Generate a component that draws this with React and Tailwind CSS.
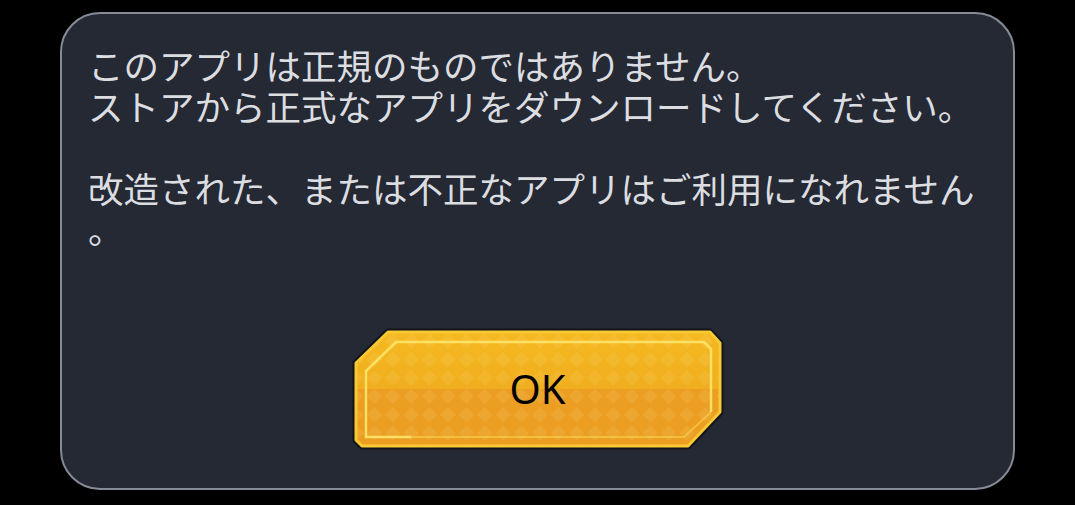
import React from "react";

const lines = [
  "このアプリは正規のものではありません。",
  "ストアから正式なアプリをダウンロードしてください。",
  "",
  "改造された、または不正なアプリはご利用になれません",
  "。",
];

const OUTER = "32,0 354,0 364,11 364,80 332,114 6,114 0,108 0,31";

const OkButton = () => (
  <button
    type="button"
    className="relative w-[364px] h-[114px] flex items-center justify-center"
  >
    <svg
      className="absolute inset-0 overflow-visible"
      width="364"
      height="114"
      viewBox="0 0 364 114"
    >
      <defs>
        <clipPath id="btnClip">
          <polygon points={OUTER} />
        </clipPath>
        <pattern
          id="diamonds"
          width="26"
          height="26"
          patternUnits="userSpaceOnUse"
          patternTransform="rotate(45)"
        >
          <rect x="1" y="1" width="11" height="11" fill="#fff4b8" opacity="0.09" />
          <rect x="14" y="14" width="11" height="11" fill="#fff4b8" opacity="0.09" />
        </pattern>
        <linearGradient id="topFill" x1="0" y1="0" x2="0" y2="1">
          <stop offset="0" stopColor="#f5b921" />
          <stop offset="1" stopColor="#f0ae1f" />
        </linearGradient>
      </defs>
      <polygon
        points={OUTER}
        fill="none"
        stroke="#101216"
        strokeWidth="7"
        strokeLinejoin="round"
        opacity="0.85"
      />
      <g clipPath="url(#btnClip)">
        <rect x="0" y="0" width="364" height="57" fill="url(#topFill)" />
        <rect x="0" y="57" width="364" height="57" fill="#eb9e22" />
        <rect x="0" y="0" width="364" height="114" fill="url(#diamonds)" />
      </g>
      <polygon
        points={OUTER}
        fill="none"
        stroke="#f8c933"
        strokeWidth="3"
        strokeLinejoin="round"
      />
      <path
        d="M 55 105 L 328 105 L 355 80"
        fill="none"
        stroke="#f9d34c"
        strokeWidth="2"
        opacity="0.6"
      />
      <path
        d="M 55 105 L 10 105 L 10 39 L 40 10 L 348 10 L 355 17 L 355 80"
        fill="none"
        stroke="#fde66a"
        strokeWidth="2.5"
        opacity="0.9"
      />
    </svg>
    <span className="relative text-[40px] leading-none text-black font-['Noto_Sans',sans-serif]">
      OK
    </span>
  </button>
);

const App = () => {
  return (
    <div className="w-[1075px] h-[505px] bg-black overflow-hidden pt-[12px] pl-[60px]">
      <div className="w-[955px] h-[478px] bg-[#242933] border-2 border-[#868c95] rounded-[40px] pt-[30px] pl-[26px] flex flex-col">
        <div className="text-[#dcdde1] text-[35.5px] leading-[41px] font-['Noto_Sans_CJK_JP',sans-serif]">
          {lines.map((line, i) => (
            <div key={i} className="whitespace-nowrap h-[41px]">
              {line}
            </div>
          ))}
        </div>
        <div className="mt-[83px] flex justify-center pr-[26px]">
          <OkButton />
        </div>
      </div>
    </div>
  );
};

export default App;
